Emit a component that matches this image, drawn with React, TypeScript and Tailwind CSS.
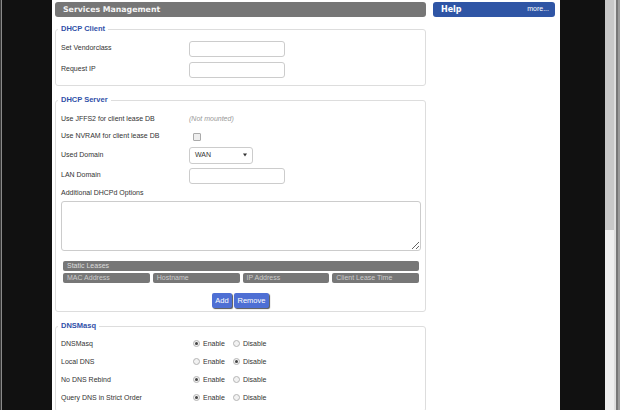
import React from "react";

const lbl = "font-['Liberation_Sans',Arial,sans-serif]";

function Radio({ on }: { on: boolean }) {
  return (
    <span className="w-[7px] h-[7px] rounded-full border border-[#b5b5b5] bg-[#f2f2f2] flex items-center justify-center shrink-0">
      {on && <span className="w-[3px] h-[3px] rounded-full bg-[#444]" />}
    </span>
  );
}

function Row({ label, h, children }: { label: string; h: string; children?: React.ReactNode }) {
  return (
    <div className={`flex items-center ${h}`}>
      <div className="w-[128px] shrink-0 text-[7px] text-[#333]">{label}</div>
      {children}
    </div>
  );
}

function Field() {
  return <div className="w-[96px] h-[16px] border border-[#ccc] rounded-[3px] bg-white" />;
}

function EnDis({ label, enable }: { label: string; enable: boolean }) {
  return (
    <Row label={label} h="h-[18px]">
      <div className="flex items-center text-[7px] text-[#333]">
        <span className="ml-[4px] -mt-[2px]"><Radio on={enable} /></span>
        <span className="ml-[3px] w-[30px]">Enable</span>
        <span className="-mt-[2px]"><Radio on={!enable} /></span>
        <span className="ml-[3px]">Disable</span>
      </div>
    </Row>
  );
}

function Box({ title, mt, children }: { title: string; mt: string; children?: React.ReactNode }) {
  return (
    <fieldset className={`border border-[#ddd] rounded-[3px] px-[2px] ${mt}`}>
      <legend className="px-[3px] text-[7.5px] leading-[10px] font-bold text-[#3050a8]">{title}</legend>
      <div className="pl-[3px]">{children}</div>
    </fieldset>
  );
}

export default function App() {
  return (
    <div className={`w-[620px] h-[410px] overflow-hidden flex bg-[#111] ${lbl}`}>
      <div className="w-[1px] bg-[#3a3a3a]" />
      <div className="w-[1px] bg-[#8a8a8a]" />
      <div className="w-[50px]" />
      <div className="w-[508px] bg-white flex gap-[7px] pt-[2px] pl-[3px] pr-[5px]">
        <div className="w-[371px] shrink-0">
          <div className="h-[15px] rounded-[3px] bg-[#767676] flex items-center pl-[8px]">
            <span className="font-['DejaVu_Sans',Verdana,sans-serif] font-bold text-[7.8px] text-[#f4f4f4]">
              Services Management
            </span>
          </div>

          <Box title="DHCP Client" mt="mt-[7px]">
            <div className="pt-[4px] pb-[5px]">
              <Row label="Set Vendorclass" h="h-[21px]">
                <Field />
              </Row>
              <Row label="Request IP" h="h-[21px]">
                <Field />
              </Row>
            </div>
          </Box>

          <Box title="DHCP Server" mt="mt-[9px]">
            <div className="pt-[5px] pb-[3px]">
              <Row label="Use JFFS2 for client lease DB" h="h-[18px]">
                <span className="text-[7px] italic text-[#999]">(Not mounted)</span>
              </Row>
              <Row label="Use NVRAM for client lease DB" h="h-[17px]">
                <span className="ml-[4px] w-[8px] h-[8px] border border-[#aaa] rounded-[1px] bg-[#eee]" />
              </Row>
              <Row label="Used Domain" h="h-[20px]">
                <div className="w-[64px] h-[17px] border border-[#ccc] rounded-[3px] flex items-center justify-between pl-[5px] pr-[5px]">
                  <span className="text-[7px] text-[#333]">WAN</span>
                  <svg width="4" height="4" viewBox="0 0 4 4">
                    <path d="M0 0.5 L4 0.5 L2 3.5 Z" fill="#333" />
                  </svg>
                </div>
              </Row>
              <Row label="LAN Domain" h="h-[21px]">
                <Field />
              </Row>
              <Row label="Additional DHCPd Options" h="h-[15px]" />
              <textarea
                readOnly
                className="block w-[360px] h-[50px] border border-[#ccc] rounded-[3px] outline-none"
              />
              <div className="ml-[2px] w-[356px] mt-[10px] h-[10px] rounded-[2px] bg-[#777] flex items-center pl-[4px] text-[7px] text-[#ddd]">
                Static Leases
              </div>
              <div className="ml-[2px] w-[356px] mt-[2px] grid grid-cols-4 gap-[3px]">
                {["MAC Address", "Hostname", "IP Address", "Client Lease Time"].map((t) => (
                  <div key={t} className="h-[10px] rounded-[2px] bg-[#777] flex items-center pl-[4px] text-[7px] text-[#ccc]">
                    {t}
                  </div>
                ))}
              </div>
              <div className="mt-[10px] flex gap-[2px] ml-[151px]">
                <div className="w-[20px] h-[15px] rounded-[2px] bg-[#4e6fd4] shadow-[1px_1px_1px_#555] flex items-center justify-center text-[7.5px] text-white">
                  Add
                </div>
                <div className="w-[35px] h-[15px] rounded-[2px] bg-[#4e6fd4] shadow-[1px_1px_1px_#555] flex items-center justify-center text-[7.5px] text-white">
                  Remove
                </div>
              </div>
            </div>
          </Box>

          <Box title="DNSMasq" mt="mt-[9px]">
            <div className="pt-[4px] pb-[4px]">
              <EnDis label="DNSMasq" enable={true} />
              <EnDis label="Local DNS" enable={false} />
              <EnDis label="No DNS Rebind" enable={true} />
              <EnDis label="Query DNS in Strict Order" enable={true} />
            </div>
          </Box>
        </div>

        <div className="w-[122px] shrink-0">
          <div className="h-[15px] rounded-[3px] bg-[#2f55a5] flex items-center justify-between pl-[8px] pr-[6px]">
            <span className="font-['DejaVu_Sans',Verdana,sans-serif] font-bold text-[8px] text-white">Help</span>
            <span className="text-[7px] text-white">more...</span>
          </div>
        </div>
      </div>
      <div className="w-[45px]" />
      <div className="w-[15px] flex">
        <div className="w-[9px] flex flex-col">
          <div className="h-[230px] bg-[#c8c8c8]" />
          <div className="flex-1 bg-[#eeeeee]" />
        </div>
        <div className="w-[2px] bg-[#dddddd]" />
        <div className="w-[2px] bg-[#777]" />
        <div className="w-[2px] bg-[#9a9a9a]" />
      </div>
    </div>
  );
}
